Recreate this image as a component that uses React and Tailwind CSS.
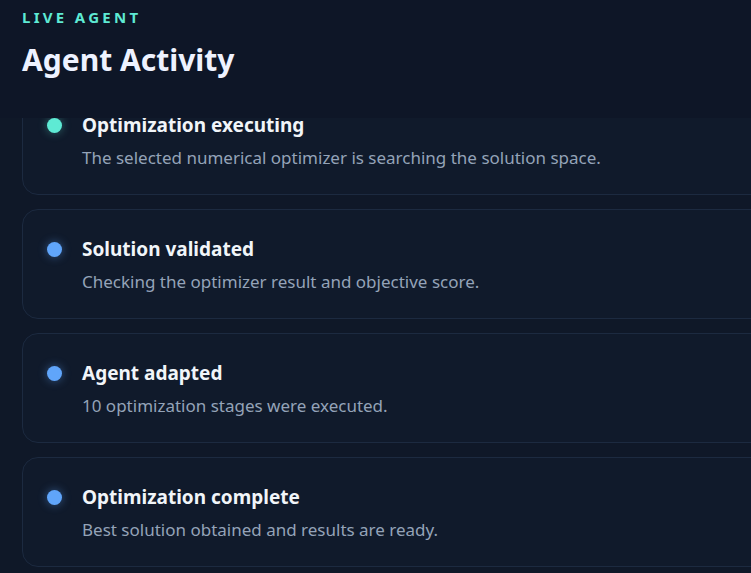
const events = [
  {
    title: 'Optimization executing',
    text: 'The selected numerical optimizer is searching the solution space.',
    dot: 'bg-[#5eead4] shadow-[0_0_10px_rgba(94,234,212,0.4)]',
  },
  {
    title: 'Solution validated',
    text: 'Checking the optimizer result and objective score.',
    dot: 'bg-[#60a5fa] shadow-[0_0_10px_rgba(96,165,250,0.45)]',
  },
  {
    title: 'Agent adapted',
    text: '10 optimization stages were executed.',
    dot: 'bg-[#60a5fa] shadow-[0_0_10px_rgba(96,165,250,0.45)]',
  },
  {
    title: 'Optimization complete',
    text: 'Best solution obtained and results are ready.',
    dot: 'bg-[#60a5fa] shadow-[0_0_10px_rgba(96,165,250,0.45)]',
  },
];

const EventCard = ({ title, text, dot }) => (
  <div className="h-[110px] w-[780px] rounded-[16px] border border-[#1c2a40] bg-[#101a2b] pl-[24px] pt-[27px]">
    <div className="flex items-center">
      <div className={`w-[15px] h-[15px] rounded-full ${dot}`} />
      <h3 className="ml-[20px] text-[19px] font-bold leading-[24px] text-[#f1f5f9]">{title}</h3>
    </div>
    <p className="ml-[35px] mt-[10px] text-[17px] leading-[22px] text-[#94a3b8]">{text}</p>
  </div>
);

export default function App() {
  return (
    <div
      className="h-[573px] w-[751px] overflow-hidden bg-[#0e1627] flex flex-col"
      style={{ fontFamily: '"Noto Sans", "Open Sans", sans-serif' }}
    >
      {/* Header */}
      <div className="h-[118px] shrink-0 px-[22px] pt-[8px] bg-[#0e1627]">
        <p className="text-[15px] font-bold leading-[19px] tracking-[0.22em] text-[#5eead4]">LIVE AGENT</p>
        <h2 className="mt-[14px] text-[30px] font-bold leading-[38px] text-[#eef2ff]">Agent Activity</h2>
      </div>

      {/* Scrolled list */}
      <div className="flex-1 overflow-hidden bg-[#0f1828]">
        <div className="-mt-[33px] pl-[22px] flex flex-col gap-[14px]">
          {events.map((e) => (
            <EventCard key={e.title} {...e} />
          ))}
        </div>
      </div>
    </div>
  );
}
